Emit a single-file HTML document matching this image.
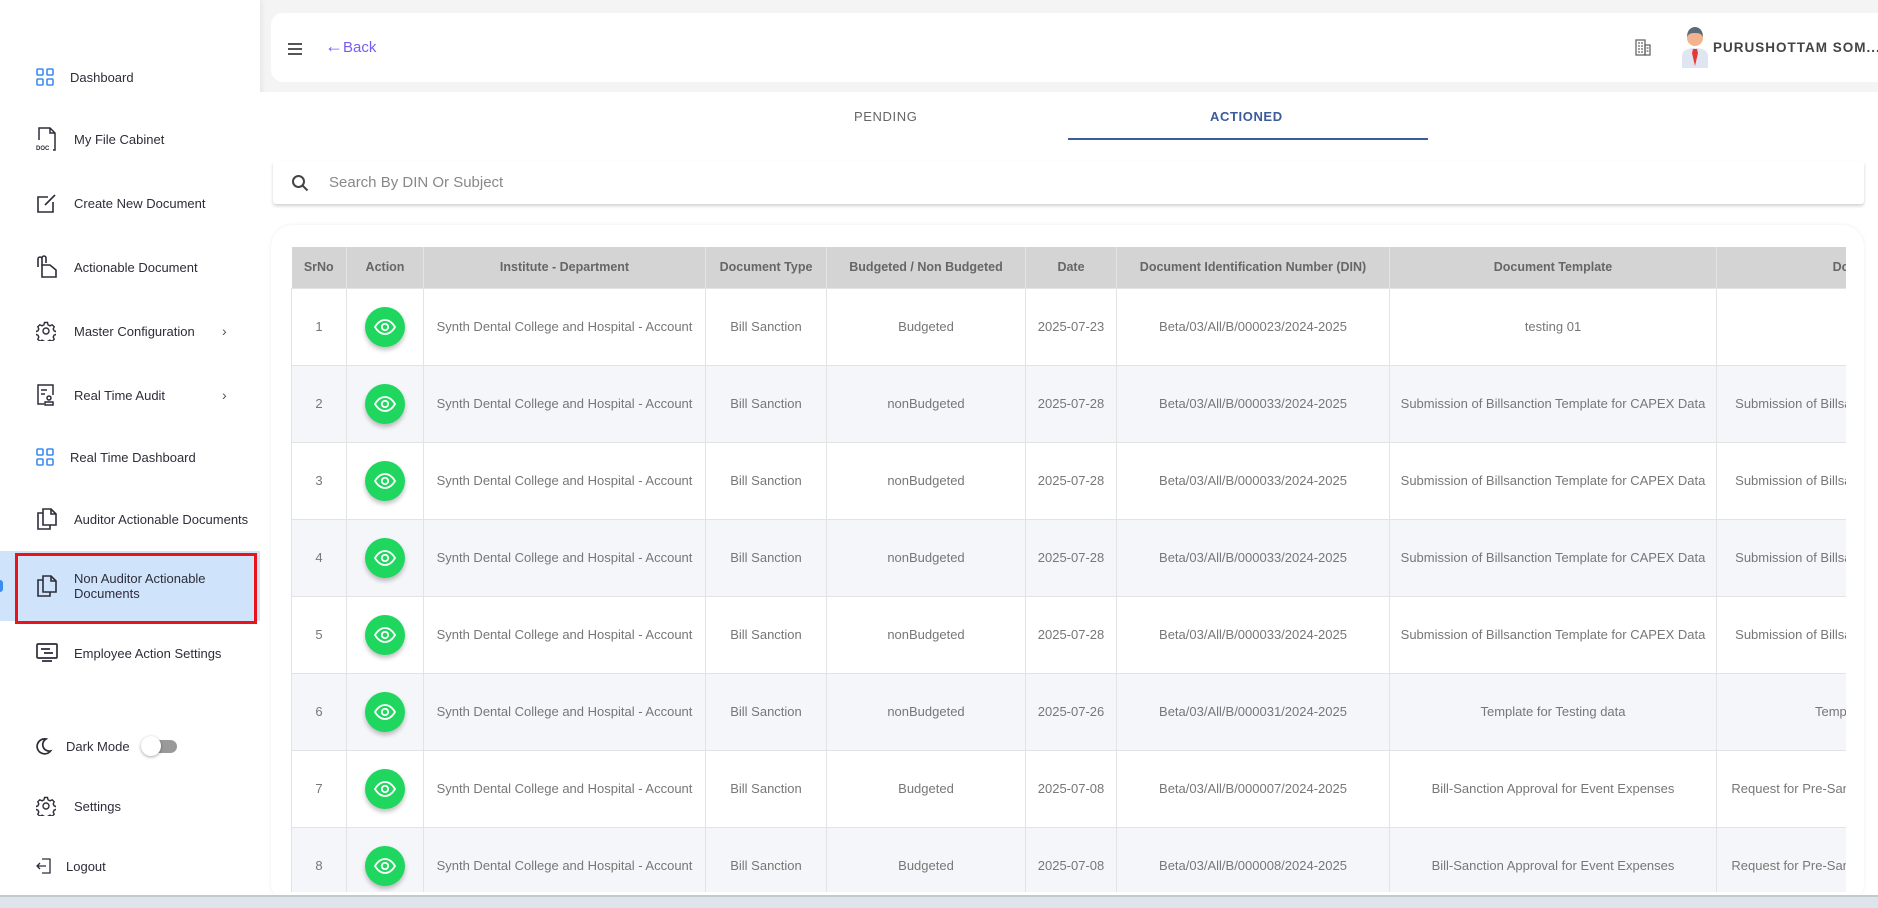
<!DOCTYPE html>
<html><head><meta charset="utf-8"><style>
*{box-sizing:border-box;margin:0;padding:0}
body{width:1878px;height:908px;overflow:hidden;background:#f4f4f4;font-family:"Liberation Sans",sans-serif;position:relative}
.side{position:absolute;left:0;top:0;width:260px;height:895px;background:#fff;box-shadow:2px 0 6px rgba(0,0,0,.06)}
.item{position:absolute;left:0;width:260px;height:30px;display:flex;align-items:center;font-size:13px;color:#2d2d3a}
.item svg{position:absolute;left:36px;top:50%;transform:translateY(-50%)}
.item span{position:absolute;left:74px}
.chev{position:absolute;left:222px;color:#555;font-size:14px}
.main{position:absolute;left:260px;top:92px;width:1618px;height:806px;background:#fff}
.hdr{position:absolute;left:271px;top:13px;width:1607px;height:69px;background:#fff;border-radius:12px 0 0 12px}
.tab{position:absolute;top:109px;font-size:13px;letter-spacing:.6px}
.search{position:absolute;left:273px;top:161px;width:1591px;height:43px;background:#fff;box-shadow:0 2px 3px rgba(0,0,0,.18);border-radius:3px}
.card{position:absolute;left:271px;top:225px;width:1593px;height:680px;background:#fff;border-radius:22px;box-shadow:0 0 4px rgba(0,0,0,.07)}
.wrap{position:absolute;left:291px;top:247px;width:1555px;height:645px;overflow:hidden}
table{border-collapse:collapse;table-layout:fixed;width:1767px}
th{background:#d4d4d4;color:#666;font-size:12.5px;font-weight:bold;height:41px;border-right:1px solid #e4e4e4;text-align:center;white-space:nowrap;overflow:hidden}
td{height:77px;font-size:13px;color:#777;text-align:center;border:1px solid #e3e3e3;white-space:nowrap;overflow:hidden}
tr:nth-child(odd) td{background:#f5f6f9}
.eye{display:inline-flex;width:40px;height:40px;border-radius:50%;background:#1fd65f;align-items:center;justify-content:center;box-shadow:0 3px 5px rgba(0,0,0,.25)}
</style></head><body>
<div class="side">
 <div class="item" style="top:62px"><svg width="18" height="18" viewBox="0 0 18 18" fill="none" stroke="#3b8cf0" stroke-width="1.6"><rect x="1" y="1" width="6" height="6" rx="1"/><rect x="11" y="1" width="6" height="6" rx="1"/><rect x="1" y="11" width="6" height="6" rx="1"/><rect x="11" y="11" width="6" height="6" rx="1"/></svg><span style="left:70px">Dashboard</span></div>
 <div class="item" style="top:124px"><svg width="22" height="26" viewBox="0 0 22 26" fill="none" stroke="#2d2d3a" stroke-width="1.5"><path d="M3 14V2h11l5 5v17h-2"/><path d="M14 2v5h5"/><text x="0" y="24" font-size="6" fill="#2d2d3a" stroke="none" font-family="Liberation Sans" font-weight="bold">DOC</text></svg><span>My File Cabinet</span></div>
 <div class="item" style="top:188px"><svg width="22" height="22" viewBox="0 0 22 22" fill="none" stroke="#2d2d3a" stroke-width="1.6"><path d="M12 5H2v15h15V10"/><path d="M9 13l10-10"/></svg><span>Create New Document</span></div>
 <div class="item" style="top:252px"><svg width="22" height="24" viewBox="0 0 22 24" fill="none" stroke="#2d2d3a" stroke-width="1.6"><path d="M2 12V4a2 2 0 014 0v6M6 4v-1a2 2 0 014 0v5"/><path d="M6 10h8l6 5v7H6z"/></svg><span>Actionable Document</span></div>
 <div class="item" style="top:316px"><svg width="20" height="20" viewBox="0 0 20 20" fill="none" stroke="#2d2d3a" stroke-width="1.4"><circle cx="10" cy="10" r="3"/><path d="M8.5 1.5h3l.5 2.3 2 1 2.2-1 2 2-1 2.2 1 2 2.3.5v3l-2.3.5-1 2 1 2.2-2 2-2.2-1-2 1-.5 2.3h-3l-.5-2.3-2-1-2.2 1-2-2 1-2.2-1-2-2.3-.5v-3l2.3-.5 1-2-1-2.2 2-2 2.2 1 2-1z"/></svg><span>Master Configuration</span><b class="chev" style="font-weight:normal">&#x203A;</b></div>
 <div class="item" style="top:380px"><svg width="20" height="24" viewBox="0 0 20 24" fill="none" stroke="#2d2d3a" stroke-width="1.5"><path d="M8 21H2V2h15v10"/><path d="M5 7h6M5 11h4"/><circle cx="13" cy="15" r="2"/><path d="M9 22h8v-3H9z"/></svg><span>Real Time Audit</span><b class="chev" style="font-weight:normal">&#x203A;</b></div>
 <div class="item" style="top:442px"><svg width="18" height="18" viewBox="0 0 18 18" fill="none" stroke="#3b8cf0" stroke-width="1.6"><rect x="1" y="1" width="6" height="6" rx="1"/><rect x="11" y="1" width="6" height="6" rx="1"/><rect x="1" y="11" width="6" height="6" rx="1"/><rect x="11" y="11" width="6" height="6" rx="1"/></svg><span style="left:70px">Real Time Dashboard</span></div>
 <div class="item" style="top:504px"><svg width="22" height="24" viewBox="0 0 22 24" fill="none" stroke="#2d2d3a" stroke-width="1.6"><path d="M7 6H2v16h12v-4"/><path d="M7 2h8l5 5v11H7z"/><path d="M15 2v5h5"/></svg><span>Auditor Actionable Documents</span></div>
 <div style="position:absolute;left:0;top:551px;width:260px;height:70px;background:#cfe4fb"></div>
 <div style="position:absolute;left:-3px;top:580px;width:6px;height:12px;border-radius:3px;background:#3b8cf0"></div>
 <div style="position:absolute;left:15px;top:553px;width:242px;height:71px;border:3px solid #e8141a"></div>
 <div class="item" style="top:571px"><svg width="22" height="24" viewBox="0 0 22 24" fill="none" stroke="#2d2d3a" stroke-width="1.6"><path d="M7 6H2v16h12v-4"/><path d="M7 2h8l5 5v11H7z"/><path d="M15 2v5h5"/></svg><span style="line-height:15px">Non Auditor Actionable<br>Documents</span></div>
 <div class="item" style="top:638px"><svg width="22" height="20" viewBox="0 0 22 20" fill="none" stroke="#2d2d3a" stroke-width="1.7"><rect x="1" y="1" width="20" height="14" rx="1"/><path d="M6 18h10M5 6h9M8 10h9"/></svg><span>Employee Action Settings</span></div>
 <div class="item" style="top:731px"><svg width="18" height="18" viewBox="0 0 18 18" fill="none" stroke="#2d2d3a" stroke-width="1.7" style="left:35px"><path d="M11 2a7.5 7.5 0 104.5 12A6.5 6.5 0 0111 2z"/></svg><span style="left:66px">Dark Mode</span>
  <div style="position:absolute;left:143px;top:9px;width:34px;height:13px;border-radius:7px;background:#9a9a9a"></div>
  <div style="position:absolute;left:141px;top:5px;width:20px;height:20px;border-radius:50%;background:#fff;box-shadow:0 1px 3px rgba(0,0,0,.35)"></div></div>
 <div class="item" style="top:791px"><svg width="20" height="20" viewBox="0 0 20 20" fill="none" stroke="#2d2d3a" stroke-width="1.4"><circle cx="10" cy="10" r="3"/><path d="M8.5 1.5h3l.5 2.3 2 1 2.2-1 2 2-1 2.2 1 2 2.3.5v3l-2.3.5-1 2 1 2.2-2 2-2.2-1-2 1-.5 2.3h-3l-.5-2.3-2-1-2.2 1-2-2 1-2.2-1-2-2.3-.5v-3l2.3-.5 1-2-1-2.2 2-2 2.2 1 2-1z"/></svg><span>Settings</span></div>
 <div class="item" style="top:851px"><svg width="16" height="16" viewBox="0 0 16 16" fill="none" stroke="#2d2d3a" stroke-width="1.3"><path d="M6 1h8v14H6"/><path d="M10 8H1M4 5L1 8l3 3"/></svg><span style="left:66px">Logout</span></div>
</div>
<div class="main"></div>
<div class="hdr">
 <div style="position:absolute;left:17px;top:30px;width:14px;height:2px;background:#555;box-shadow:0 5px 0 #555,0 10px 0 #555"></div>
 <div style="position:absolute;left:54px;top:26px;font-size:15px;color:#7b5cf0"><span style="font-size:18px;line-height:15px">&#x2190;</span>Back</div>
 <svg style="position:absolute;left:1363px;top:25px" width="18" height="18" viewBox="0 0 18 18" fill="none" stroke="#666" stroke-width="1.3"><rect x="2" y="2" width="9" height="15"/><rect x="11" y="7" width="5" height="10"/><path d="M4 5h2M7 5h2M4 8h2M7 8h2M4 11h2M7 11h2M4 14h2M7 14h2M12.5 10h2M12.5 13h2"/></svg>
 <svg style="position:absolute;left:1410px;top:13px" width="28" height="42" viewBox="0 0 28 42"><path d="M1 42V30c0-5 5-8 13-8s13 3 13 8v12z" fill="#dfe6f2"/><circle cx="14" cy="12" r="8" fill="#f2b38e"/><path d="M6 11c0-7 4-10 8-10s8 3 8 10c-2-4-5-4-8-4s-6 0-8 4z" fill="#5d6a7a"/><path d="M12 23h4l1 4-3 13-3-13z" fill="#e53935"/></svg>
 <div style="position:absolute;left:1442px;top:27px;font-size:13.5px;font-weight:bold;color:#444;letter-spacing:1px;white-space:nowrap">PURUSHOTTAM SOM...</div>
</div>
<div class="tab" style="left:854px;color:#666">PENDING</div>
<div class="tab" style="left:1210px;color:#3b5b9a;font-weight:bold">ACTIONED</div>
<div style="position:absolute;left:1068px;top:138px;width:360px;height:2px;background:#3b5b9a"></div>
<div class="search"><svg style="position:absolute;left:18px;top:13px" width="18" height="18" viewBox="0 0 18 18" fill="none" stroke="#444" stroke-width="2"><circle cx="7.5" cy="7.5" r="5.5"/><path d="M11.5 11.5l5 5"/></svg><div style="position:absolute;left:56px;top:13px;font-size:15px;color:#888">Search By DIN Or Subject</div></div>
<div class="card"></div>
<div class="wrap"><table>
<colgroup><col style="width:55px"><col style="width:77px"><col style="width:282px"><col style="width:121px"><col style="width:199px"><col style="width:91px"><col style="width:273px"><col style="width:327px"><col style="width:342px"></colgroup>
<tr><th>SrNo</th><th>Action</th><th>Institute - Department</th><th>Document Type</th><th>Budgeted / Non Budgeted</th><th>Date</th><th>Document Identification Number (DIN)</th><th>Document Template</th><th>Document Subject</th></tr>
<tr><td>1</td><td><span class="eye">E</span></td><td>Synth Dental College and Hospital - Account</td><td>Bill Sanction</td><td>Budgeted</td><td>2025-07-23</td><td>Beta/03/All/B/000023/2024-2025</td><td>testing 01</td><td></td></tr>
<tr><td>2</td><td><span class="eye">E</span></td><td>Synth Dental College and Hospital - Account</td><td>Bill Sanction</td><td>nonBudgeted</td><td>2025-07-28</td><td>Beta/03/All/B/000033/2024-2025</td><td>Submission of Billsanction Template for CAPEX Data</td><td>Submission of Billsanction Template for CAPEX Data</td></tr>
<tr><td>3</td><td><span class="eye">E</span></td><td>Synth Dental College and Hospital - Account</td><td>Bill Sanction</td><td>nonBudgeted</td><td>2025-07-28</td><td>Beta/03/All/B/000033/2024-2025</td><td>Submission of Billsanction Template for CAPEX Data</td><td>Submission of Billsanction Template for CAPEX Data</td></tr>
<tr><td>4</td><td><span class="eye">E</span></td><td>Synth Dental College and Hospital - Account</td><td>Bill Sanction</td><td>nonBudgeted</td><td>2025-07-28</td><td>Beta/03/All/B/000033/2024-2025</td><td>Submission of Billsanction Template for CAPEX Data</td><td>Submission of Billsanction Template for CAPEX Data</td></tr>
<tr><td>5</td><td><span class="eye">E</span></td><td>Synth Dental College and Hospital - Account</td><td>Bill Sanction</td><td>nonBudgeted</td><td>2025-07-28</td><td>Beta/03/All/B/000033/2024-2025</td><td>Submission of Billsanction Template for CAPEX Data</td><td>Submission of Billsanction Template for CAPEX Data</td></tr>
<tr><td>6</td><td><span class="eye">E</span></td><td>Synth Dental College and Hospital - Account</td><td>Bill Sanction</td><td>nonBudgeted</td><td>2025-07-26</td><td>Beta/03/All/B/000031/2024-2025</td><td>Template for Testing data</td><td>Template for Testing data</td></tr>
<tr><td>7</td><td><span class="eye">E</span></td><td>Synth Dental College and Hospital - Account</td><td>Bill Sanction</td><td>Budgeted</td><td>2025-07-08</td><td>Beta/03/All/B/000007/2024-2025</td><td>Bill-Sanction Approval for Event Expenses</td><td>Request for Pre-Sanction Approval of Event Expenses</td></tr>
<tr><td>8</td><td><span class="eye">E</span></td><td>Synth Dental College and Hospital - Account</td><td>Bill Sanction</td><td>Budgeted</td><td>2025-07-08</td><td>Beta/03/All/B/000008/2024-2025</td><td>Bill-Sanction Approval for Event Expenses</td><td>Request for Pre-Sanction Approval of Event Expenses</td></tr>
</table></div>
<div style="position:absolute;left:0;top:895px;width:1878px;height:13px;background:#dde4ec;border-top:2px solid #c4c9ce"></div>
<script>
document.querySelectorAll('.eye').forEach(function(e){e.innerHTML='<svg width="22" height="16" viewBox="0 0 22 16" fill="none" stroke="#fff" stroke-width="1.8"><path d="M1 8c3-5 6.5-7 10-7s7 2 10 7c-3 5-6.5 7-10 7S4 13 1 8z"/><circle cx="11" cy="8" r="3.2"/></svg>';});
</script>
</body></html>
